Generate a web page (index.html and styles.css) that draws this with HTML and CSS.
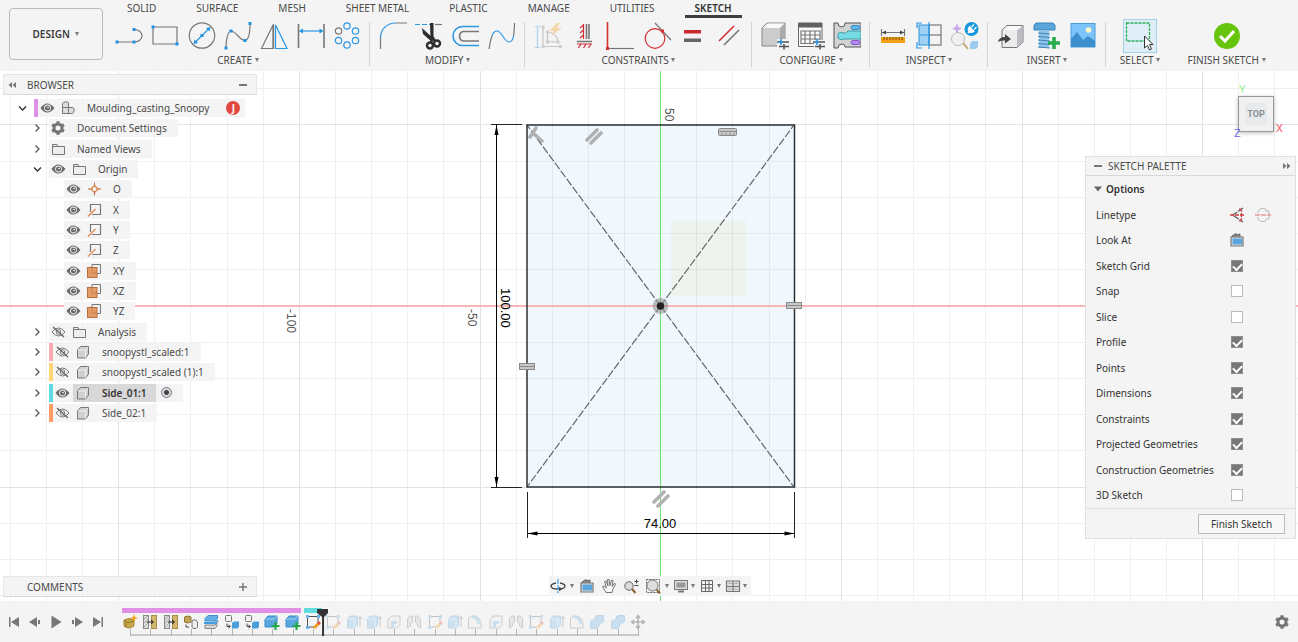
FILE: index.html
```html
<!DOCTYPE html>
<html lang="en">
<head>
<meta charset="utf-8">
<title>Moulding_casting_Snoopy</title>
<link rel="stylesheet" href="styles.css">
</head>
<body>
<svg class="sprite" aria-hidden="true">
  <symbol id="eye" viewBox="0 0 16 16"><path d="M1.500 8Q8-1 15.500 8Q8 17 1.500 8Z" fill="#6a6a6a"/><circle cx="8.500" cy="8" r="3.400" fill="#f4f4f4"/><circle cx="8.500" cy="8" r="2.500" fill="#6a6a6a"/><circle cx="9" cy="7.500" r=".8" fill="#fff"/></symbol>
  <symbol id="eyeoff" viewBox="0 0 16 16"><path d="M2 8Q8.500 0 15 8Q8.500 16 2 8Z" fill="none" stroke="#777"/><circle cx="8.500" cy="8" r="2.300" fill="none" stroke="#777"/><path d="M3 3L14 13" stroke="#666" stroke-width="1.300"/></symbol>
  <symbol id="folder" viewBox="0 0 16 16"><path d="M2.500 13.500V3.500H7L8 5.500H14.500V13.500Z" fill="#eee" stroke="#777"/><path d="M2 5.500H8" stroke="#777"/></symbol>
  <symbol id="cube" viewBox="0 0 16 16"><path d="M2.500 6L5.500 2.500H13.500V10L10.500 14H2.500Z" fill="#d0d0d0" stroke="#777" stroke-linejoin="round"/><path d="M3 6H10.500V13.500M10.500 6L13 3" fill="none" stroke="#f2f2f2"/></symbol>
  <symbol id="parts" viewBox="0 0 16 16"><path d="M2.500 7.500V3.500L4 2H7.500L8.500 3V7.500H13L14 8.500V12L12.500 13.500H2.500Z" fill="#ddd" stroke="#777"/><path d="M2.500 7.500H8.500V13.500" fill="none" stroke="#777"/></symbol>
  <symbol id="gear" viewBox="0 0 16 16"><circle cx="8" cy="8" r="4" fill="none" stroke="#757575" stroke-width="3"/><path d="M8 1.200V3.500M8 12.500V14.800M2.100 4.600L4.100 5.800M11.900 10.200L13.900 11.400M2.100 11.400L4.100 10.200M11.900 5.800L13.900 4.600" stroke="#757575" stroke-width="3.200"/></symbol>
  <symbol id="point" viewBox="0 0 16 16"><path d="M8.500 1.500V14.500M2 8H15" stroke="#b06a3e"/><path d="M8.500 3.500L13 8L8.500 12.500L4 8Z" fill="#d9874f"/><circle cx="8.500" cy="8" r="2" fill="#f4f4f4"/></symbol>
  <symbol id="axis" viewBox="0 0 16 16"><path d="M4.500 10V2.500H14.500V12.500H6" fill="none" stroke="#777" stroke-width="1.200"/><path d="M2 14.500L9.500 7" stroke="#e8844a" stroke-width="1.200"/></symbol>
  <symbol id="plane" viewBox="0 0 16 16"><path d="M6 5V1.500H14.500V10.500H11" fill="none" stroke="#777"/><rect x="1.500" y="4.500" width="9.500" height="10" fill="#e29a67" stroke="#b96e3c"/><path d="M6 5V10H11" fill="none" stroke="#cf8149"/></symbol>
  <symbol id="right" viewBox="0 0 10 10"><path d="M3.500 1.500L7 5L3.500 8.500" fill="none" stroke="#555" stroke-width="1.300"/></symbol>
  <symbol id="down" viewBox="0 0 10 10"><path d="M2 3.500L5.500 7L9 3.500" fill="none" stroke="#333" stroke-width="1.400"/></symbol>
  <symbol id="look" viewBox="0 0 16 16"><path d="M2 5H14V14H2Z" fill="#ddd" stroke="#777" stroke-width="1.200"/><rect x="3.500" y="6.500" width="9.500" height="6" fill="#5aa7e0"/><path d="M3 5V4L7 1.500V3L11 2V5" fill="#888" stroke="#666"/></symbol>

  <symbol id="t-form" viewBox="0 0 16 16"><path d="M2 6Q7 3 12 6V12Q7 16 2 12Z" fill="#c9a74d" stroke="#a88732"/><path d="M2 7Q7 10 12 7M4 9V13" fill="none" stroke="#8f7227"/><path d="M12 0L13 3L16 4L13 5L12 8L11 5L8 4L11 3Z" fill="#f6a51c"/></symbol>
  <symbol id="t-import" viewBox="0 0 16 16"><rect x="1.500" y="1.500" width="5" height="13" fill="#ddd" stroke="#888"/><path d="M2 5L6 2M2 9L6 5M2 13L6 9" stroke="#aaa"/><rect x="9.500" y="1.500" width="5" height="13" fill="#d2b66b" stroke="#a88f45"/><path d="M5 8H11M9 6L11.500 8L9 10" fill="none" stroke="#222"/></symbol>
  <symbol id="t-convert" viewBox="0 0 16 16"><path d="M1.500 3Q4.500 1 8 3V8Q5 10 1.500 8Z" fill="#c2a558" stroke="#907632"/><path d="M10 6H13L14.500 8V13L13 14.500H10L9 13V7Z" fill="#eee" stroke="#777"/><path d="M3 10.500V13H6" fill="none" stroke="#444"/></symbol>
  <symbol id="t-split" viewBox="0 0 16 16"><path d="M2 4.500L5 1.500H14.500V4.500L12 7H2Z" fill="#63afe4" stroke="#3f8fc9"/><path d="M1 9H12L15 6.500" fill="none" stroke="#3f9cdf" stroke-width="2"/><path d="M2 11H12L14 9V12L12 14.500H2Z" fill="#d9d9d9" stroke="#888"/></symbol>
  <symbol id="t-comp" viewBox="0 0 16 16"><rect x="1.500" y="1.500" width="6" height="6" rx="1" fill="#f1f1f1" stroke="#777"/><path d="M8 9L10 7.500H15V13L13.500 14.500H8Z" fill="#4b9eda"/><path d="M3 9.500V12.500H6M4.500 11L6.500 12.500L4.500 14" fill="none" stroke="#444"/></symbol>
  <symbol id="t-base" viewBox="0 0 16 16"><path d="M1 5L4 2H13V10L10 13H1Z" fill="#58a7e0" stroke="#3f8dc5"/><path d="M1 5H10L13 2" fill="none" stroke="#a6d3f2"/><path d="M11.500 8V16M7.500 12H15.500" stroke="#25a84a" stroke-width="2.200"/></symbol>
  <symbol id="t-sketch" viewBox="0 0 16 16"><path d="M2.500 2.500H13V9M2.500 2.500V13H9" fill="none" stroke="#555"/><path d="M1 1H4V4H1ZM12 1H15V4H12ZM1 12H4V15H1Z" fill="#6ab2ea"/><path d="M9 14L14 9" stroke="#f29c1f" stroke-width="3"/><path d="M13 10L15 8" stroke="#e05252" stroke-width="3"/></symbol>
  <symbol id="t-extrude" viewBox="0 0 16 16"><path d="M1.500 5L4 2H11.500V11L9 14H1.500Z" fill="#77b9e8" stroke="#4c98d0"/><path d="M1.500 5H9V14" fill="none" stroke="#cae5f7"/><path d="M14 13V3M12.500 5L14 2.500L15.500 5" fill="none" stroke="#666"/></symbol>
  <symbol id="t-shell" viewBox="0 0 16 16"><path d="M2 6L5 2H14V11L11 14H2Z" fill="#eee" stroke="#777"/><path d="M5 7H11V10H8V13H5Z" fill="#67b0e6"/></symbol>
  <symbol id="t-mirror" viewBox="0 0 16 16"><path d="M1.500 14V5L4 2H6.500V8L4.500 10V12ZM14.500 14V5L12 2H9.500V8L11.500 10V12Z" fill="#ccc" stroke="#777"/></symbol>
  <symbol id="t-fillet" viewBox="0 0 16 16"><path d="M1.500 14V5L4 2H8Q14 4 14 10V14Z" fill="#eee" stroke="#777"/><path d="M5 3Q11 3 12 10" fill="none" stroke="#5facdf" stroke-width="2.500"/></symbol>
  <symbol id="t-combine" viewBox="0 0 16 16"><path d="M1.500 8L3 6H6V3L8 1.500H14.500V7L13 9H10V12L8 14.500H1.500Z" fill="#69b1e5" stroke="#4b99d2"/></symbol>
  <symbol id="t-move" viewBox="0 0 16 16"><path d="M8 1.500V14.500M1.500 8H14.500M6 4L8 1.500L10 4M6 12L8 14.500L10 12M4 6L1.500 8L4 10M12 6L14.500 8L12 10" fill="none" stroke="#222" stroke-width="1.500"/></symbol>
</svg>

<header class="toolbar">
  <button class="workspace">DESIGN <i class="caret"></i></button>
  <div class="ribbon">
    <nav class="tabs">
      <button>SOLID</button><button>SURFACE</button><button>MESH</button><button>SHEET METAL</button><button>PLASTIC</button><button>MANAGE</button><button>UTILITIES</button><button class="active">SKETCH</button>
    </nav>
    <div class="groups">
      <section class="group create">
        <div class="tools">
          <button aria-label="Line"><svg viewBox="0 0 28 28"><path d="M2 20H19M19 7.500A8 6.250 0 0 1 19 20" class="g"/><path d="M.5 18.500h3v3h-3zM17.500 18.500h3v3h-3zM17.500 6h3v3h-3z" class="bf"/></svg></button>
          <button aria-label="Rectangle"><svg viewBox="0 0 28 28"><path d="M2 5H26V22H2Z" class="g"/><path d="M.5 3.500h3v3h-3zM24.500 20.500h3v3h-3z" class="bf"/></svg></button>
          <button aria-label="Circle"><svg viewBox="0 0 28 28"><circle cx="14" cy="13.500" r="12.700" class="g"/><path d="M7 20.500L21 6.500" class="b"/><path d="M12.500 12h3v3h-3zM22.500 5L21.500 9.500L18 6ZM5.500 22L6.500 17.500L10 21Z" class="bf"/></svg></button>
          <button aria-label="Spline"><svg viewBox="0 0 28 28"><path d="M2 26C2 17 4 9 7 9C12 9 16 19 21 18.500C25 18 26 8 26 1.500" class="g"/><path d="M.5 24.500h3v3h-3zM5.500 7.500h3v3h-3zM19.500 17h3v3h-3zM24.500 0h3v3h-3z" class="bf"/></svg></button>
          <button aria-label="Mirror"><svg viewBox="0 0 28 28"><path d="M1.500 26.500L13 3V26.500Z" class="g"/><path d="M13.500 2V27" class="g"/><path d="M15.500 3L27 26.500H15.500Z" class="b"/></svg></button>
          <button aria-label="Sketch dimension"><svg viewBox="0 0 28 28"><path d="M1.500 2V26M27 2V26" class="g w"/><path d="M3 9H25" class="b"/><path d="M2 9L6 6.500V11.500ZM26.500 9L22.500 6.500V11.500Z" class="bf"/></svg></button>
          <button aria-label="Circular pattern"><svg viewBox="0 0 28 28"><circle cx="5.500" cy="9" r="3.200" class="g"/><g class="b"><circle cx="14" cy="4" r="3.200"/><circle cx="22.500" cy="9" r="3.200"/><circle cx="22.500" cy="18.500" r="3.200"/><circle cx="14" cy="23" r="3.200"/><circle cx="5.500" cy="18.500" r="3.200"/></g></svg></button>
        </div>
        <button class="label">CREATE <i class="caret"></i></button>
      </section>
      <section class="group modify">
        <div class="tools">
          <button aria-label="Fillet"><svg viewBox="0 0 28 28"><path d="M1.500 27V15M17 1H28" class="g"/><path d="M1.500 16C1.500 7 8 1 17 1" class="b"/></svg></button>
          <button aria-label="Trim"><svg viewBox="0 0 28 28"><path d="M0 2.500H15" class="b" stroke-dasharray="5 2"/><path d="M20 2.500H27" class="g"/><path d="M7 6L8 12L17 20L19 17Z" fill="#2d2d2d"/><path d="M15 1H18.500V17L15.500 17Z" fill="#2d2d2d"/><g fill="none" stroke="#2d2d2d" stroke-width="2.400"><circle cx="15" cy="23.500" r="3"/><circle cx="22" cy="21.500" r="3"/><path d="M16 20L18 16L20 19"/></g></svg></button>
          <button aria-label="Offset"><svg viewBox="0 0 28 28"><path d="M27 4.500H10.500A9.500 9.500 0 0 0 10.500 23.500H27" class="b w"/><path d="M27 9.500H11A5 5 0 0 0 11 19H27" class="g w"/></svg></button>
          <button aria-label="Blend curve"><svg viewBox="0 0 28 28"><path d="M1 27C2 22 2 19 4 14M26.500 1C26.500 7 26 10 25.500 14" class="g"/><path d="M4 14C5 11 7 9 9 9C14 9 16 20 21 20C24 20 25 17 25.500 14" class="b"/></svg></button>
        </div>
        <button class="label">MODIFY <i class="caret"></i></button>
      </section>
      <section class="group constraints">
        <div class="tools">
          <button aria-label="Auto constrain" disabled><svg viewBox="0 0 28 28" opacity=".35"><path d="M3.500 5V25M1 4.500H6M1 25.500H6" class="b"/><path d="M9 5V24.500H27M13.500 19.500V10Q23 11 24 20Z" class="g"/><path d="M7.500 3.500h3v3h-3zM7.500 23h3v3h-3zM25 23h3v3h-3zM12 8.500h3v3h-3zM12 18.500h3v3h-3zM22.500 18.500h3v3h-3z" fill="#888"/><path d="M23 1L15 9H20L17 14L28 6H23L26 1Z" fill="#f1a62a"/></svg></button>
          <button aria-label="Horizontal/Vertical"><svg viewBox="0 0 28 28"><path d="M16.500 2V17M19 2V17M7 19.500H22" class="g w"/><path d="M13.500 2V17M13.500 3L10 6M13.500 8L10 11M13.500 13L10 16M7 22H22M11 22L8.500 26M16 22L13.500 26M21 22L18.500 26" class="r"/></svg></button>
          <button aria-label="Perpendicular"><svg viewBox="0 0 28 28"><path d="M1.500 0V26" class="r w"/><path d="M3 26.500H28" class="g"/><path d="M0 25h3v3h-3z" fill="#d32f35"/></svg></button>
          <button aria-label="Tangent"><svg viewBox="0 0 28 28"><circle cx="12" cy="16.500" r="9.800" class="r"/><path d="M12 1L28 18" class="g"/><path d="M18 7.500h3v3h-3z" fill="#d32f35"/></svg></button>
          <button aria-label="Equal"><svg viewBox="0 0 28 28"><path d="M5 8H22V11.500H5Z" fill="#cb2a2e"/><path d="M5 16.500H22V20H5Z" fill="#666"/></svg></button>
          <button aria-label="Parallel"><svg viewBox="0 0 28 28"><path d="M4 19L19 4" class="r w"/><path d="M9 23L24 8" class="g w"/></svg></button>
        </div>
        <button class="label">CONSTRAINTS <i class="caret"></i></button>
      </section>
      <section class="group three">
        <div class="tools">
          <button aria-label="Configure model"><svg viewBox="0 0 28 28"><path d="M1 6L6 1H24V19L19 24H1Z" fill="#ccc" stroke="#888"/><path d="M2 6L6.500 1.500H23.500L19 6Z" fill="#fafafa"/><path d="M19 6V24L24 19V1Z" fill="#aaa"/><path d="M16 17H25L28 20V28H16Z" fill="#f4f4f4"/><path d="M16 20H28M18 24.500H28M23 22V27.500" class="d w"/><path d="M20 17V23M17 20H22" class="b w"/></svg></button>
          <button aria-label="Configuration table"><svg viewBox="0 0 28 28"><path d="M1.500 1H25V24.500H1.500Z" fill="#fafafa" stroke="#666"/><path d="M1.500 1H25V5.500H1.500Z" fill="#626262"/><path d="M4 9H23V21.500H4ZM4 13H23M4 17H23M8 9V21M13 9V21M18 9V21" class="g"/><path d="M17 18H28V28H17Z" fill="#f4f4f4"/><path d="M16 20H28M18 24.500H28M23 22V27.500" class="d w"/><path d="M20 17V23M17 20H22" class="b w"/></svg></button>
          <button aria-label="Theme table"><svg viewBox="0 0 28 28"><path d="M1 1H5Q5 5 9 5Q12 5 12 1H28V25H12Q12 22 9 22Q5 22 5 26H1Z" fill="#d3d3d3" stroke="#555"/><path d="M28 9H15Q13 12 10 11Q5 9 5 13V16Q8 19 11 17H28Z" fill="#77dbe3" stroke="#3e9eaa"/><rect x="18" y="3.500" width="9" height="4" rx="2" fill="#5eb8f0" stroke="#3689c6"/><rect x="18" y="18.500" width="9" height="4" rx="2" fill="#b48af0" stroke="#8358c6"/></svg></button>
        </div>
        <button class="label">CONFIGURE <i class="caret"></i></button>
      </section>
      <section class="group three">
        <div class="tools">
          <button aria-label="Measure"><svg viewBox="0 0 28 28"><path d="M2.500 7V14M25.500 7V14M3 10.500H25" class="g"/><path d="M3 10.500L7 8.500V12.500ZM25 10.500L21 8.500V12.500Z" fill="#444"/><rect x="2" y="15" width="24" height="6" fill="#f3a116"/><path d="M5 15V18M8 15V18M11 15V18M14 15V18M17 15V18M20 15V18M23 15V18" stroke="#7b4a00"/></svg></button>
          <button aria-label="Interference"><svg viewBox="0 0 28 28"><rect x="14" y="3" width="12" height="20" class="g"/><path d="M14 13H26" class="g"/><rect x="4" y="3" width="10" height="20" fill="#9fd1f5" stroke="#2f94dd"/><path d="M4 13H14M14 0V27M2 6V1H7M2 20V26H7" class="b"/></svg></button>
          <button aria-label="Inspect assistant"><svg viewBox="0 0 28 28"><path d="M6 1L7.500 5L11 6.500L7.500 8L6 12L4.500 8L1 6.500L4.500 5Z" fill="#c9a8e8"/><circle cx="7" cy="17" r="6.500" fill="#f0f0f0" stroke="#bbb"/><path d="M12 21L17 27" stroke="#c7ac84" stroke-width="2"/><path d="M19 22L21 19H27V25L25 27H19Z" fill="#9bcbee"/><circle cx="20.500" cy="7" r="7" fill="#1597dc"/><path d="M17 11L20 8" stroke="#fff" stroke-width="1.500"/><path d="M18.500 4.500L23 9.500Q19 11.500 17.500 9Q16.500 7 18.500 4.500ZM20.500 5L23 2.500M23 7.500L25.500 5" fill="#fff" stroke="#fff" stroke-width="1.200"/></svg></button>
        </div>
        <button class="label">INSPECT <i class="caret"></i></button>
      </section>
      <section class="group three">
        <div class="tools">
          <button aria-label="Insert derive"><svg viewBox="0 0 28 28"><path d="M5 8L10 3.500H26V20L20 25.500H5Z" fill="#ececef" stroke="#777"/><path d="M6 8L10.500 4H25L20 8Z" fill="#fafafa"/><path d="M20 8.500V25L25.500 19.500V4Z" fill="#bcbcc4"/><path d="M1 20Q2 15 8 15V12L14 17L8 21.500V18.500Q4 18 1 20Z" fill="#444"/></svg></button>
          <button aria-label="Insert fastener"><svg viewBox="0 0 28 28"><path d="M1 3L3 1H20L22 3V8H1Z" fill="#5ba5da" stroke="#3f84b7"/><rect x="6" y="8" width="10" height="18" fill="#8ec3ea"/><path d="M5 11L17 12M5 14.500L17 15.500M5 18L17 19M5 21.500L17 22.500M5 25L17 26" stroke="#3f84b7"/><path d="M21 15V27M15 21H27" stroke="#29ac4f" stroke-width="3.600"/></svg></button>
          <button aria-label="Insert canvas"><svg viewBox="0 0 28 28"><rect x="2" y="1.500" width="24" height="23.500" fill="#7cc3fa" stroke="#4b9bd6"/><path d="M2 17L8 10L14 18L19 14L26 19V25H2Z" fill="#3c8fcd"/><circle cx="19.500" cy="8" r="2.800" fill="#fff8c8"/></svg></button>
        </div>
        <button class="label">INSERT <i class="caret"></i></button>
      </section>
      <section class="group select">
        <div class="tools">
          <button class="on" aria-label="Select"><svg viewBox="0 0 32 32"><path d="M2.500 3H25.500V21H2.500Z" fill="none" stroke="#2db15a" stroke-width="1.300" stroke-dasharray="3 1"/><path d="M20.500 16V28L23.500 25.500L25.500 30L27.500 29L25.500 24.500H29Z" fill="#fff" stroke="#333"/></svg></button>
        </div>
        <button class="label">SELECT <i class="caret"></i></button>
      </section>
      <section class="group finish">
        <div class="tools">
          <button aria-label="Finish sketch"><svg viewBox="0 0 28 28"><circle cx="14" cy="14" r="13" fill="#66c40c"/><path d="M7 14L12 19L21 9" fill="none" stroke="#fff" stroke-width="3"/></svg></button>
        </div>
        <button class="label">FINISH SKETCH <i class="caret"></i></button>
      </section>
    </div>
  </div>
</header>

<main class="viewport">
  <svg class="scene" viewBox="0 0 1298 530" preserveAspectRatio="xMidYMid slice">
    <rect x="527" y="54" width="267" height="362" fill="#f0f8fe"/>
    <rect x="671" y="149" width="75" height="76" fill="#eef3ee"/>
    <g shape-rendering="crispEdges" fill="none">
      <path stroke="#000" stroke-opacity=".06" d="M10.500 0V530M46.500 0V530M82.500 0V530M154.500 0V530M190.500 0V530M227.500 0V530M263.500 0V530M335.500 0V530M371.500 0V530M407.500 0V530M443.500 0V530M516.500 0V530M552.500 0V530M588.500 0V530M624.500 0V530M696.500 0V530M732.500 0V530M769.500 0V530M805.500 0V530M877.500 0V530M913.500 0V530M949.500 0V530M985.500 0V530M1058.500 0V530M1094.500 0V530M1130.500 0V530M1166.500 0V530M1238.500 0V530M1274.500 0V530M0 17.500H1298M0 90.500H1298M0 126.500H1298M0 162.500H1298M0 198.500H1298M0 271.500H1298M0 307.500H1298M0 343.500H1298M0 379.500H1298M0 452.500H1298M0 488.500H1298M0 524.500H1298"/>
      <path stroke="#000" stroke-opacity=".11" d="M118.500 0V530M299.500 0V530M480.500 0V530M841.500 0V530M1022.500 0V530M1202.500 0V530M0 53.500H1298M0 416.500H1298"/>
    </g>
    <rect x="0" y="234" width="1298" height="2" fill="#f7b5b5"/>
    <rect x="660" y="0" width="1" height="530" fill="#72e072"/>
    <g fill="none" stroke="#666" stroke-width="1.200" stroke-dasharray="8 2"><path d="M660.500 235L527 54M660.500 235L794 54M660.500 235L527 416M660.500 235L794 416"/></g>
    <rect x="527" y="54" width="267.500" height="362" fill="none" stroke="#2d3033" stroke-width="1.500"/>
    <g stroke="#222" fill="none"><path d="M491 53.500H522M491 416.500H522M527.500 421V467M794.500 421V467"/><path d="M496.500 54V416M528 462.500H794" stroke="#000"/></g>
    <path d="M496.500 54L494.500 64H498.500ZM496.500 416L494.500 406H498.500ZM527.500 462.500L537.500 460.500V464.500ZM794.500 462.500L784.500 460.500V464.500Z"/>
    <g class="ruler"><text transform="translate(287 238) rotate(90)">-100</text><text transform="translate(468 238) rotate(90)">-50</text><text transform="translate(665 37) rotate(90)">50</text></g>
    <g class="dimension"><text transform="translate(501 217) rotate(90)">100.00</text><text x="660" y="457" text-anchor="middle">74.00</text></g>
    <g stroke="#b1b1b1" stroke-width="3.600" stroke-linecap="round"><path d="M587 69L597 59M591 72L601 62M654 431L664 421M658 435L668 425M533 62L542 70M530 66L536 57"/></g>
    <g fill="#c8c8c8" stroke="#8b8b8b"><rect x="718.500" y="57.500" width="18" height="7" rx="1"/><path d="M719 60.500H736M721 64L723 62M725 64L727 62M729 64L731 62M733 64L735 62"/><rect x="519.500" y="292.500" width="15" height="6"/><path d="M519 295.500H535"/><rect x="786.500" y="231.500" width="15" height="6"/><path d="M786 234.500H802"/></g>
    <circle cx="660.500" cy="235" r="8" fill="#888" fill-opacity=".45"/><circle cx="660.500" cy="235" r="6" fill="none" stroke="#aaa"/><circle cx="660.500" cy="235" r="3.800" fill="#222"/>
  </svg>

  <aside class="browser">
    <div class="panel-head"><button class="icon-btn" aria-label="Collapse"><svg viewBox="0 0 8 8"><path d="M4 1V7L.5 4ZM8 1V7L4.500 4Z" fill="#777"/></svg></button><h2>BROWSER</h2><button class="icon-btn" aria-label="Minimize"><svg viewBox="0 0 8 8"><path d="M0 4H8" stroke="#777" stroke-width="2"/></svg></button></div>
    <ul class="tree">
      <li><button class="twist" aria-label="Collapse"><svg><use href="#down"/></svg></button><span class="chip bar violet"><svg><use href="#eye"/></svg><svg><use href="#parts"/></svg><span>Moulding_casting_Snoopy</span><b class="user">J</b></span></li>
      <li class="l1"><button class="twist" aria-label="Expand"><svg><use href="#right"/></svg></button><span class="chip"><svg><use href="#gear"/></svg><span>Document Settings</span></span></li>
      <li class="l1"><button class="twist" aria-label="Expand"><svg><use href="#right"/></svg></button><span class="chip"><svg><use href="#folder"/></svg><span>Named Views</span></span></li>
      <li class="l1"><button class="twist" aria-label="Collapse"><svg><use href="#down"/></svg></button><span class="chip"><svg><use href="#eye"/></svg><svg><use href="#folder"/></svg><span>Origin</span></span></li>
      <li class="l2"><span class="chip"><svg><use href="#eye"/></svg><svg><use href="#point"/></svg><span>O</span></span></li>
      <li class="l2"><span class="chip"><svg><use href="#eye"/></svg><svg><use href="#axis"/></svg><span>X</span></span></li>
      <li class="l2"><span class="chip"><svg><use href="#eye"/></svg><svg><use href="#axis"/></svg><span>Y</span></span></li>
      <li class="l2"><span class="chip"><svg><use href="#eye"/></svg><svg><use href="#axis"/></svg><span>Z</span></span></li>
      <li class="l2"><span class="chip"><svg><use href="#eye"/></svg><svg><use href="#plane"/></svg><span>XY</span></span></li>
      <li class="l2"><span class="chip"><svg><use href="#eye"/></svg><svg><use href="#plane"/></svg><span>XZ</span></span></li>
      <li class="l2"><span class="chip"><svg><use href="#eye"/></svg><svg><use href="#plane"/></svg><span>YZ</span></span></li>
      <li class="l1"><button class="twist" aria-label="Expand"><svg><use href="#right"/></svg></button><span class="chip"><svg><use href="#eyeoff"/></svg><svg><use href="#folder"/></svg><span>Analysis</span></span></li>
      <li class="l1"><button class="twist" aria-label="Expand"><svg><use href="#right"/></svg></button><span class="chip bar pink"><svg><use href="#eyeoff"/></svg><svg><use href="#cube"/></svg><span>snoopystl_scaled:1</span></span></li>
      <li class="l1"><button class="twist" aria-label="Expand"><svg><use href="#right"/></svg></button><span class="chip bar yellow"><svg><use href="#eyeoff"/></svg><svg><use href="#cube"/></svg><span>snoopystl_scaled (1):1</span></span></li>
      <li class="l1"><button class="twist" aria-label="Expand"><svg><use href="#right"/></svg></button><span class="chip bar cyan"><svg><use href="#eye"/></svg><span class="current"><svg><use href="#cube"/></svg><span>Side_01:1</span></span><input type="radio" checked aria-label="Activate Side_01:1"></span></li>
      <li class="l1"><button class="twist" aria-label="Expand"><svg><use href="#right"/></svg></button><span class="chip bar orange"><svg><use href="#eyeoff"/></svg><svg><use href="#cube"/></svg><span>Side_02:1</span></span></li>
    </ul>
  </aside>

  <div class="comments panel-head"><h2>COMMENTS</h2><button class="icon-btn" aria-label="Add comment"><svg viewBox="0 0 8 8"><path d="M0 4H8M4 0V8" stroke="#777" stroke-width="1.500"/></svg></button></div>

  <div class="viewcube"><button>TOP</button><span class="ax-y">Y</span><span class="ax-z">Z</span><span class="ax-x">X</span></div>

  <aside class="palette">
    <div class="panel-head"><button class="icon-btn" aria-label="Minimize"><svg viewBox="0 0 8 8"><path d="M0 4H8" stroke="#777" stroke-width="2"/></svg></button><h2>SKETCH PALETTE</h2><button class="icon-btn" aria-label="Expand"><svg viewBox="0 0 8 8"><path d="M0 1V7L3.500 4ZM4 1V7L7.500 4Z" fill="#777"/></svg></button></div>
    <h3><svg viewBox="0 0 8 8"><path d="M0 1.500H8L4 6.500Z" fill="#666"/></svg>Options</h3>
    <div class="options">
      <div><span>Linetype</span><button class="mini" aria-label="Construction"><svg viewBox="0 0 16 16"><path d="M14 1L3.500 8L14 15" fill="none" stroke="#555" stroke-width="1.200" stroke-dasharray="6 1"/><path d="M1 8H15.500M10.500 1.500L13.500 5M10.500 14.500L13.500 11M12.500 6V10" stroke="#d2383c" stroke-width="1.300" stroke-dasharray="4 1"/></svg></button><button class="mini" aria-label="Centerline"><svg viewBox="0 0 16 16"><path d="M3 6V4L6 1.500H10L11 4H14V12H11L10 14.500H6L3 12V10" fill="none" stroke="#bbb"/><path d="M0 8H16" stroke="#e59a9c" stroke-width="1.300" stroke-dasharray="5 1"/></svg></button></div>
      <div><span>Look At</span><button class="mini" aria-label="Look at"><svg><use href="#look"/></svg></button></div>
      <label><span>Sketch Grid</span><input type="checkbox" checked></label>
      <label><span>Snap</span><input type="checkbox"></label>
      <label><span>Slice</span><input type="checkbox"></label>
      <label><span>Profile</span><input type="checkbox" checked></label>
      <label><span>Points</span><input type="checkbox" checked></label>
      <label><span>Dimensions</span><input type="checkbox" checked></label>
      <label><span>Constraints</span><input type="checkbox" checked></label>
      <label><span>Projected Geometries</span><input type="checkbox" checked></label>
      <label><span>Construction Geometries</span><input type="checkbox" checked></label>
      <label><span>3D Sketch</span><input type="checkbox"></label>
    </div>
    <footer><button>Finish Sketch</button></footer>
  </aside>

  <div class="navbar">
    <button class="drop wide" aria-label="Orbit"><svg viewBox="0 0 16 16"><path d="M6 5Q1 6 1 8Q1 11 8 11Q15 11 15 8Q15 6 10 5M9 9.500L11.500 11L9 12.500" fill="none" stroke="#444" stroke-width="1.300"/><path d="M8 1V15" stroke="#48a5ea" stroke-width="1.300" stroke-dasharray="5 1"/></svg><i class="caret"></i></button>
    <button aria-label="Look at"><svg><use href="#look"/></svg></button>
    <button aria-label="Pan"><svg viewBox="0 0 16 16"><path d="M5 14.500L1.500 8.500L3 8L5.500 10L3.500 3.500L5 3L7 8L6.500 1.500H8L9 7.500L10.500 2L12 2.500L11 8.500L13.500 5L14.500 6L12 11L11 14.500Z" fill="#f6f6f6" stroke="#777"/></svg></button>
    <button aria-label="Zoom"><svg viewBox="0 0 16 16"><circle cx="6" cy="8" r="4.200" fill="#ddd" stroke="#666"/><path d="M9 11L12.500 15" stroke="#8a6235" stroke-width="2"/><path d="M11.500 3.500H15.500M13.500 1.500V5.500M11.500 7.500H15.500" stroke="#444"/></svg></button>
    <button class="drop wide" aria-label="Zoom window"><svg viewBox="0 0 16 16"><rect x="1.500" y="1.500" width="13" height="13" fill="none" stroke="#666" stroke-dasharray="2 1"/><circle cx="7.500" cy="7.500" r="5.500" fill="#ddd" stroke="#777"/><path d="M11.500 11.500L15 15.500" stroke="#8a6235" stroke-width="2"/></svg><i class="caret"></i></button>
    <button class="drop" aria-label="Display"><svg viewBox="0 0 16 16"><rect x="1.500" y="2.500" width="13" height="9" fill="#ddd" stroke="#777"/><rect x="3.500" y="4.500" width="9" height="5" fill="#999"/><path d="M5 13.500H11" stroke="#777" stroke-width="2"/></svg><i class="caret"></i></button>
    <button class="drop" aria-label="Grid"><svg viewBox="0 0 16 16"><path d="M2.500 2.500H13.500V13.500H2.500ZM6.500 2V14M10 2V14M2 6.500H14M2 10H14" fill="none" stroke="#666"/></svg><i class="caret"></i></button>
    <button class="drop" aria-label="Viewports"><svg viewBox="0 0 16 16"><path d="M1.500 3H14.500V13.500H1.500ZM8 3V14M1 8.500H15" fill="#ddd" stroke="#777" stroke-width="1.200"/><path d="M3.500 5.500H6.500M9.500 5.500H12.500M3.500 11H6.500M9.500 11H12.500" stroke="#aaa"/></svg><i class="caret"></i></button>
  </div>
</main>

<footer class="timeline">
  <div class="playback">
    <button aria-label="First"><svg viewBox="0 0 16 16"><path d="M13 3V13L5 8ZM3 3H4.500V13H3Z"/></svg></button>
    <button aria-label="Previous"><svg viewBox="0 0 16 16"><path d="M10 3V13L2 8ZM11 6H13V10H11Z"/></svg></button>
    <button aria-label="Play"><svg viewBox="0 0 16 16"><path d="M3.500 1.500V14.500L13.500 8Z"/></svg></button>
    <button aria-label="Next"><svg viewBox="0 0 16 16"><path d="M6 3V13L14 8ZM3 6H5V10H3Z"/></svg></button>
    <button aria-label="Last"><svg viewBox="0 0 16 16"><path d="M3 3V13L11 8ZM11.500 3H13V13H11.500Z"/></svg></button>
  </div>
  <div class="track">
    <i class="span first"></i><i class="span second"></i>
    <button class="step" aria-label="Form"><svg><use href="#t-form"/></svg></button>
    <button class="step" aria-label="Import"><svg><use href="#t-import"/></svg></button>
    <button class="step" aria-label="Import"><svg><use href="#t-import"/></svg></button>
    <button class="step" aria-label="Convert"><svg><use href="#t-convert"/></svg></button>
    <button class="step" aria-label="Split body"><svg><use href="#t-split"/></svg></button>
    <button class="step" aria-label="Component"><svg><use href="#t-comp"/></svg></button>
    <button class="step" aria-label="Component"><svg><use href="#t-comp"/></svg></button>
    <button class="step" aria-label="New body"><svg><use href="#t-base"/></svg></button>
    <button class="step" aria-label="New body"><svg><use href="#t-base"/></svg></button>
    <button class="step now" aria-label="Sketch"><svg><use href="#t-sketch"/></svg></button>
    <button class="step later" aria-label="Sketch"><svg><use href="#t-sketch"/></svg></button>
    <button class="step later" aria-label="Extrude"><svg><use href="#t-extrude"/></svg></button>
    <button class="step later" aria-label="Extrude"><svg><use href="#t-extrude"/></svg></button>
    <button class="step later" aria-label="Shell"><svg><use href="#t-shell"/></svg></button>
    <button class="step later" aria-label="Mirror"><svg><use href="#t-mirror"/></svg></button>
    <button class="step later" aria-label="Sketch"><svg><use href="#t-sketch"/></svg></button>
    <button class="step later" aria-label="Extrude"><svg><use href="#t-extrude"/></svg></button>
    <button class="step later" aria-label="Fillet"><svg><use href="#t-fillet"/></svg></button>
    <button class="step later" aria-label="Shell"><svg><use href="#t-shell"/></svg></button>
    <button class="step later" aria-label="Mirror"><svg><use href="#t-mirror"/></svg></button>
    <button class="step later" aria-label="Sketch"><svg><use href="#t-sketch"/></svg></button>
    <button class="step later" aria-label="Extrude"><svg><use href="#t-extrude"/></svg></button>
    <button class="step later" aria-label="Fillet"><svg><use href="#t-fillet"/></svg></button>
    <button class="step later" aria-label="Combine"><svg><use href="#t-combine"/></svg></button>
    <button class="step later" aria-label="Combine"><svg><use href="#t-combine"/></svg></button>
    <button class="step later" aria-label="Move"><svg><use href="#t-move"/></svg></button>
  </div>
  <button class="settings" aria-label="Settings"><svg><use href="#gear"/></svg></button>
</footer>
</body>
</html>
```
FILE: styles.css
```css
* { box-sizing: border-box; }
body {
  margin: 0;
  min-height: 100vh;
  display: flex;
  flex-direction: column;
  background: #fff;
  color: #4a4a4a;
  font: 10px/14px "Noto Sans", "Open Sans", sans-serif;
}
button {
  margin: 0;
  padding: 0;
  border: 0;
  background: none;
  color: inherit;
  font: inherit;
}
svg { display: block; flex: none; }
h2, h3 { margin: 0; font: inherit; }
.sprite { position: absolute; width: 0; height: 0; }
.caret {
  display: inline-block;
  border: 2px solid transparent;
  border-top: 4px solid #777;
  border-bottom: 0;
  vertical-align: 2px;
}

/* Toolbar */
.toolbar { display: flex; background: #f4f4f4; }
.workspace {
  width: 94px;
  height: 52px;
  margin: 8px 3px 0 9px;
  border: 1px solid #bbb;
  border-radius: 4px;
  font-weight: 600;
  color: #3c3c3c;
}
.workspace .caret { margin-left: 3px; }
.ribbon { flex: 1; }
.tabs { display: flex; gap: 20px; padding-left: 11px; }
.tabs button { padding: 1px 10px; height: 18px; border-bottom: 3px solid transparent; }
.tabs .active { border-color: #3c3f44; color: #333; font-weight: 600; }
.groups { display: flex; padding: 4px 0; }
.group {
  display: flex;
  flex-direction: column;
  padding: 0 8px 0 9px;
  border-right: 1px solid #d2d2d2;
}
.create { width: 264px; }
.modify { width: 155px; }
.constraints { width: 227px; }
.three { width: 118px; }
.select { width: 67px; border: 0; }
.finish { width: 106px; border: 0; }
.tools { display: flex; justify-content: space-between; height: 28px; }
.select .tools, .finish .tools { justify-content: center; align-items: center; }
.tools svg { width: 28px; height: 28px; }
.tools .on { border: 1px solid #a5d4ea; background: #dfeef6; }
.tools .on svg { width: 32px; height: 32px; }
.label { height: 14px; margin-top: 3px; white-space: nowrap; }
.g, .b, .r, .d { fill: none; stroke-width: 1.2; }
.g { stroke: #777; }
.b { stroke: #2c97e5; }
.r { stroke: #d32f35; }
.d { stroke: #555; }
.w { stroke-width: 1.6; }
.bf { fill: #2492e6; }

/* Viewport */
.viewport { position: relative; flex: 1; min-height: 530px; overflow: hidden; }
.scene { position: absolute; inset: 0; width: 100%; height: 100%; }
.ruler { font: 12px "Liberation Sans", sans-serif; fill: #555; }
.dimension { font: 13px "Liberation Sans", sans-serif; fill: #000; }
.panel-head {
  display: flex;
  align-items: center;
  height: 21px;
  background: #f4f4f4;
  border: 1px solid #e6e6e6;
  border-bottom-color: #d8d8d8;
}
.panel-head h2 { flex: 1; }
.icon-btn svg { width: 8px; height: 8px; }

.browser { position: absolute; left: 3px; top: 3px; width: 254px; }
.browser .panel-head { padding: 0 9px 0 4px; gap: 11px; }
.tree {
  display: grid;
  align-content: space-between;
  height: 323px;
  margin: 4px 0 0;
  padding: 0 0 0 13px;
  list-style: none;
}
.tree li { display: flex; align-items: center; height: 18px; }
.tree .l1 { padding-left: 15px; }
.tree .l2 { padding-left: 48px; }
.twist { width: 12px; margin-right: 6px; }
.twist svg { width: 10px; height: 10px; margin: 0 auto; }
.chip {
  display: flex;
  align-items: center;
  gap: 5px;
  height: 18px;
  padding: 0 11px 0 1px;
  background: #f4f4f4;
  white-space: nowrap;
}
.chip svg { width: 16px; height: 16px; }
.chip svg + span { margin-left: 6px; }
.bar { border-left: 4px solid; }
.violet { padding-right: 5px; border-color: #e091e6; }
.pink { border-color: #ffabb2; }
.yellow { border-color: #ffd673; }
.cyan { border-color: #60dce0; }
.orange { border-color: #ff9c66; }
.user {
  width: 14px;
  height: 14px;
  margin-left: 12px;
  border-radius: 7px;
  background: #e0483f;
  color: #fff;
  text-align: center;
}
.current {
  display: flex;
  align-items: center;
  gap: 5px;
  height: 18px;
  padding: 0 9px 0 2px;
  background: #d8d8d8;
  color: #333;
  font-weight: 600;
}
.chip svg + .current { margin-left: -2px; }
.chip input {
  appearance: none;
  width: 11px;
  height: 11px;
  margin: 0;
  border: 1px solid #777;
  border-radius: 6px;
  background: radial-gradient(#444 0 2px, #d8dbe6 3px);
}

.comments { position: absolute; left: 3px; bottom: 4px; width: 254px; padding: 0 9px 0 23px; }

.viewcube { position: absolute; top: 25px; right: 24px; width: 36px; height: 36px; font: 11px/12px Roboto, sans-serif; }
.viewcube button {
  width: 36px;
  height: 36px;
  border: 1px solid #999;
  background: #e8eaec;
  box-shadow: inset 0 0 0 6px #f1f1f1, 0 1px 4px #bbb;
  color: #8a8f94;
  font-size: 9px;
  font-weight: 700;
}
.viewcube span { position: absolute; }
.ax-y { left: 1px; top: -12px; color: #8df08d; }
.ax-z { left: -4px; bottom: -8px; color: #6a6af5; }
.ax-x { right: -9px; bottom: -3px; color: #f56a6a; }

.palette {
  position: absolute;
  top: 85px;
  right: 2px;
  width: 211px;
  border: 1px solid #e0e0e0;
  background: #f4f4f4;
  color: #333;
}
.palette .panel-head { height: 19px; padding: 0 4px 0 8px; gap: 6px; border-width: 0 0 1px; color: #4a4a4a; }
.palette h3 { display: flex; align-items: center; gap: 4px; padding: 6px 8px; font-weight: 600; }
.palette h3 svg { width: 8px; height: 8px; }
.options { display: grid; grid-auto-rows: 1fr; height: 306px; padding-left: 10px; }
.options > * { display: grid; grid-template-columns: 124px 18px 18px; column-gap: 8px; align-items: center; }
.mini { width: 18px; }
.mini svg { width: 16px; height: 16px; margin: auto; }
.options span { white-space: nowrap; }
.options input {
  appearance: none;
  width: 12px;
  height: 12px;
  margin: 0 auto;
  border: 1px solid #bbb;
  background: #fff;
}
.options input:checked { border-color: #8f8f8f; background: #777; }
.options input:checked::before {
  content: "";
  display: block;
  width: 7px;
  height: 4px;
  margin: 2px auto 0;
  border: solid #fff;
  border-width: 0 0 2px 2px;
  transform: rotate(-45deg);
}
.palette footer { display: flex; justify-content: flex-end; padding: 5px 10px 4px; border-top: 1px solid #ddd; }
.palette footer button { width: 87px; height: 20px; border: 1px solid #bbb; background: #f8f8f8; }

.navbar {
  position: absolute;
  left: 50%;
  bottom: 5px;
  display: flex;
  align-items: center;
  width: 202px;
  height: 20px;
  margin-left: -100px;
  padding-left: 1px;
  background: #f4f4f4;
}
.navbar button { display: flex; align-items: center; width: 22px; height: 20px; }
.navbar .drop { width: 26px; gap: 2px; }
.navbar .wide { width: 29px; gap: 4px; }
.navbar svg { width: 16px; height: 16px; }

/* Timeline */
.timeline { display: flex; align-items: flex-start; height: 41px; padding: 0 8px 0 6px; background: #f4f4f4; }
.playback { display: flex; gap: 5px; padding-top: 13px; width: 114px; }
.playback svg { width: 16px; height: 16px; fill: #777; }
.track {
  display: grid;
  grid-template-columns: repeat(26, 1fr);
  width: 528px;
  padding-top: 7px;
  background: linear-gradient(#c8c8c8, #c8c8c8) 10px 100% / calc(100% - 19px) 2px no-repeat;
}
.span { grid-row: 1; height: 5px; margin: 0 2px; }
.first { grid-column: 1 / 10; background: #e091e6; }
.second { grid-column: 10; margin: 0 1px; background: #60dce0; }
.step { position: relative; grid-row: 2; height: 23px; padding: 1px 0 6px; }
.step svg { width: 16px; height: 16px; margin: 0 auto; }
.step::after { content: ""; position: absolute; left: 50%; bottom: 0; width: 1px; height: 7px; background: #b5b5b5; }
.later svg { opacity: .3; }
.now::before {
  content: "";
  position: absolute;
  z-index: 1;
  right: -5px;
  top: -4px;
  width: 11px;
  height: 27px;
  background: #333;
  clip-path: polygon(0 0, 100% 0, 100% 4px, 7px 8px, 7px 100%, 5px 100%, 5px 8px, 0 4px);
}
.settings { margin: 13px 0 0 auto; }
.settings svg { width: 16px; height: 16px; }
```
